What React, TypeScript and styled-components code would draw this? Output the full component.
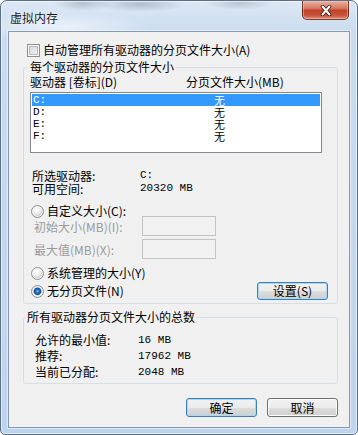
import React from 'react';
import styled, { createGlobalStyle } from 'styled-components';

const GlobalStyle = createGlobalStyle`
  html, body {
    margin: 0;
    padding: 0;
    background: #ffffff;
  }
  body {
    font-family: "Noto Sans CJK SC", "Liberation Sans", sans-serif;
    font-size: 12px;
    color: #000000;
  }
`;

const Window = styled.div`
  box-sizing: border-box;
  width: 358px;
  height: 435px;
  display: flex;
  flex-direction: column;
  padding: 0 7px 6px;
  border: 1px solid #5b6f86;
  border-radius: 7px 7px 5px 5px;
  background:
    radial-gradient(30px 8px at 82px 2px, rgba(110, 120, 135, 0.35), transparent),
    radial-gradient(45px 8px at 140px 3px, rgba(100, 112, 128, 0.35), transparent),
    radial-gradient(35px 7px at 238px 2px, rgba(110, 120, 135, 0.3), transparent),
    radial-gradient(90px 14px at 60px 26px, rgba(255, 255, 255, 0.6), transparent),
    linear-gradient(to bottom, #dde8f5 0px, #cbdcf0 30px, #bed3ec 100%);
  box-shadow: inset 0 0 0 1px rgba(255, 255, 255, 0.55);
`;

const TitleBar = styled.div`
  flex-shrink: 0;
  height: 30px;
  display: flex;
  justify-content: space-between;
  align-items: flex-start;
`;

const Title = styled.span`
  margin: 9px 0 0 2px;
  line-height: 16px;
  color: #1a1a1a;
  text-shadow: 0 0 6px rgba(255, 255, 255, 0.9);
`;

const CloseButton = styled.div`
  box-sizing: border-box;
  width: 47px;
  height: 19px;
  margin-right: 1px;
  display: flex;
  align-items: center;
  justify-content: center;
  border: 1px solid rgba(80, 28, 18, 0.75);
  border-top: none;
  border-radius: 0 0 5px 5px;
  background: linear-gradient(
    to bottom,
    #eab0a2 0%,
    #d77a64 40%,
    #c0432a 52%,
    #c8553c 80%,
    #e0917a 100%
  );
  box-shadow: inset 0 0 0 1px rgba(255, 205, 195, 0.45);
`;

const Client = styled.div`
  flex: 1;
  display: flex;
  flex-direction: column;
  border: 1px solid #8598b0;
  background: #f0f0f0;
  padding: 0 11px 0 14px;
  box-shadow: 0 0 0 1px rgba(255, 255, 255, 0.5);
`;

const Choice = styled.div<{ $top: number; $indent: number; $disabled?: boolean }>`
  display: flex;
  align-items: center;
  gap: 3px;
  height: 10px;
  line-height: 10px;
  margin-top: ${p => p.$top}px;
  padding-left: ${p => p.$indent}px;
  white-space: nowrap;
  color: ${p => (p.$disabled ? '#9b9b9b' : '#000000')};
`;

const CheckBox = styled.span`
  box-sizing: border-box;
  flex-shrink: 0;
  width: 13px;
  height: 13px;
  border: 1px solid #8e8f8f;
  background: linear-gradient(135deg, #d0d3d8 0%, #f6f6f6 100%);
  box-shadow: inset 0 0 0 1px #f8f8f8, inset 0 0 0 2px #b7bcc2;
`;

const Radio = styled.span<{ $checked?: boolean }>`
  box-sizing: border-box;
  flex-shrink: 0;
  width: 13px;
  height: 13px;
  border-radius: 50%;
  border: 1px solid #8e8f8f;
  background: ${p =>
    p.$checked
      ? 'radial-gradient(circle at 50% 48%, #7fc0f2 0, #2c78c6 1.6px, #0d4a8a 3.2px, #9cc6ec 4px, #eeeeee 4.6px, #d6d6d6 6px)'
      : 'radial-gradient(circle at 40% 35%, #ffffff 0, #ececec 4px, #d2d2d2 6px)'};
  box-shadow: inset 0 0 0 1px rgba(255, 255, 255, 0.7);
`;

const GroupBox = styled.div<{ $top: number; $pad: number }>`
  display: flex;
  flex-direction: column;
  margin-top: ${p => p.$top}px;
  padding: 0 9px 3px ${p => p.$pad}px;
  border: 1px solid #d5dfe5;
  border-radius: 3px;
`;

const GroupCaption = styled.span`
  align-self: flex-start;
  margin: -8px 0 0 -2px;
  padding: 0 2px;
  line-height: 14px;
  background: #f0f0f0;
`;

const HeaderRow = styled.div`
  display: grid;
  grid-template-columns: 156px 1fr;
  margin-top: 1px;
  line-height: 14px;
  white-space: nowrap;
`;

const ListBox = styled.div`
  box-sizing: border-box;
  height: 61px;
  margin: 3px 6px 0 0;
  padding: 1px;
  border: 1px solid #828790;
  background: #ffffff;
`;

const ListRow = styled.div<{ $selected?: boolean }>`
  display: grid;
  grid-template-columns: 181px 1fr;
  align-items: center;
  height: 12px;
  line-height: 12px;
  padding-left: 1px;
  background: ${p => (p.$selected ? '#3399ff' : 'transparent')};
  color: ${p => (p.$selected ? '#ffffff' : '#000000')};
`;

const SizeCell = styled.span`
  font-size: 11px;
  line-height: 12px;
`;

const Mono = styled.span`
  font-family: "Liberation Mono", "DejaVu Sans Mono", monospace;
  font-size: 11px;
`;

const InfoGrid = styled.div<{ $top: number; $indent: number; $label: number; $row: number }>`
  display: grid;
  grid-template-columns: ${p => p.$label}px 1fr;
  grid-auto-rows: ${p => p.$row}px;
  align-items: center;
  margin-top: ${p => p.$top}px;
  padding-left: ${p => p.$indent}px;
  line-height: ${p => p.$row}px;
  white-space: nowrap;
`;

const FieldRow = styled.div<{ $top: number }>`
  display: flex;
  align-items: center;
  margin-top: ${p => p.$top}px;
  padding-left: 4px;
  color: #9b9b9b;
  white-space: nowrap;
`;

const FieldLabel = styled.span`
  width: 108px;
`;

const TextBox = styled.div`
  box-sizing: border-box;
  width: 74px;
  height: 20px;
  border: 1px solid #c3c3c3;
  background: #f2f2f2;
`;

const SplitRow = styled.div`
  display: flex;
  justify-content: space-between;
  align-items: center;
  margin-top: 4px;
  height: 18px;
  padding-left: 1px;
`;

const PushButton = styled.button<{ $primary?: boolean; $height: number }>`
  box-sizing: border-box;
  width: 71px;
  height: ${p => p.$height}px;
  padding: 0;
  font: inherit;
  font-size: 12px;
  line-height: 1;
  color: #000000;
  border: 1px solid ${p => (p.$primary ? '#3c7fb1' : '#707070')};
  border-radius: 3px;
  background: linear-gradient(
    to bottom,
    #f2f2f2 0%,
    #ebebeb 50%,
    #dddddd 50%,
    #cfcfcf 100%
  );
  box-shadow: inset 0 0 0 1px ${p => (p.$primary ? '#a8d8f6' : '#fcfcfc')};
`;

const ButtonRow = styled.div`
  display: flex;
  justify-content: flex-end;
  gap: 10px;
  margin-top: 14px;
`;

const drives = ['C:', 'D:', 'E:', 'F:'];

const totals = [
  ['允许的最小值:', '16 MB'],
  ['推荐:', '17962 MB'],
  ['当前已分配:', '2048 MB'],
];

const CloseGlyph = () => (
  <svg width="12" height="11" viewBox="0 0 12 11">
    <path d="M2.5 1.5 L9.5 9.5 M9.5 1.5 L2.5 9.5" stroke="#3d140c" strokeWidth="3.6" strokeLinecap="round" />
    <path d="M2.5 1.5 L9.5 9.5 M9.5 1.5 L2.5 9.5" stroke="#ffffff" strokeWidth="2" strokeLinecap="round" />
  </svg>
);

const App: React.FC = () => (
  <>
    <GlobalStyle />
    <Window>
      <TitleBar>
        <Title>虚拟内存</Title>
        <CloseButton>
          <CloseGlyph />
        </CloseButton>
      </TitleBar>
      <Client>
        <Choice $top={13} $indent={4}>
          <CheckBox />
          自动管理所有驱动器的分页文件大小(A)
        </Choice>

        <GroupBox $top={12} $pad={6}>
          <GroupCaption>每个驱动器的分页文件大小</GroupCaption>
          <HeaderRow>
            <span>驱动器 [卷标](D)</span>
            <span>分页文件大小(MB)</span>
          </HeaderRow>
          <ListBox>
            {drives.map((d, i) => (
              <ListRow key={d} $selected={i === 0}>
                <Mono>{d}</Mono>
                <SizeCell>无</SizeCell>
              </ListRow>
            ))}
          </ListBox>
          <InfoGrid $top={16} $indent={2} $label={108} $row={13}>
            <span>所选驱动器:</span>
            <Mono>C:</Mono>
            <span>可用空间:</span>
            <Mono>20320 MB</Mono>
          </InfoGrid>
          <Choice $top={11} $indent={1}>
            <Radio />
            自定义大小(C):
          </Choice>
          <FieldRow $top={0}>
            <FieldLabel>初始大小(MB)(I):</FieldLabel>
            <TextBox />
          </FieldRow>
          <FieldRow $top={3}>
            <FieldLabel>最大值(MB)(X):</FieldLabel>
            <TextBox />
          </FieldRow>
          <Choice $top={9} $indent={1}>
            <Radio />
            系统管理的大小(Y)
          </Choice>
          <SplitRow>
            <Choice $top={0} $indent={0}>
              <Radio $checked />
              无分页文件(N)
            </Choice>
            <PushButton $primary $height={18}>设置(S)</PushButton>
          </SplitRow>
        </GroupBox>

        <GroupBox $top={13} $pad={3}>
          <GroupCaption>所有驱动器分页文件大小的总数</GroupCaption>
          <InfoGrid $top={8} $indent={8} $label={103} $row={16}>
            {totals.map(([label, value]) => (
              <React.Fragment key={label}>
                <span>{label}</span>
                <Mono>{value}</Mono>
              </React.Fragment>
            ))}
          </InfoGrid>
        </GroupBox>

        <ButtonRow>
          <PushButton $primary $height={19}>确定</PushButton>
          <PushButton $height={19}>取消</PushButton>
        </ButtonRow>
      </Client>
    </Window>
  </>
);

export default App;
